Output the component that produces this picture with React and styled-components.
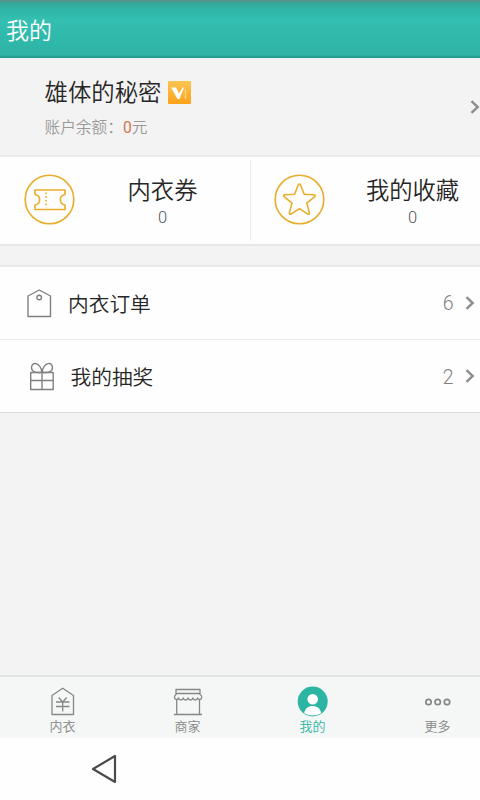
import React from 'react';
import styled, { createGlobalStyle } from 'styled-components';

const GlobalStyle = createGlobalStyle`
    body {
        margin: 0;
        background: #f3f3f3;
        overflow: hidden;
    }
`;

const Screen = styled.div`
    display: flex;
    flex-direction: column;
    width: 480px;
    height: 800px;
    overflow: hidden;
    background: #f3f3f3;
    color: #262626;
    font-family: Roboto, "Noto Sans CJK SC", sans-serif;
    font-weight: 350;
    white-space: nowrap;
`;

const Header = styled.header`
    display: flex;
    align-items: center;
    flex: none;
    box-sizing: border-box;
    height: 59px;
    padding: 0 6px 1px;
    background: linear-gradient(#5f8e87 0, #35a598 3px, #2fb5a6 9px, #33bfb1 20px, #2db3a5 55px, #249b8b 57px, #269b8c 58px, #e8f3f1 58px);
    color: #fff;
    font-size: 23px;
`;

const Profile = styled.section`
    display: flex;
    align-items: center;
    justify-content: space-between;
    flex: none;
    box-sizing: border-box;
    height: 96px;
    padding: 0 0 0 44.5px;
`;

const UserName = styled.div`
    display: flex;
    align-items: center;
    gap: 6.5px;
    height: 35px;
    font-size: 23.4px;
    line-height: 33px;

    span {
        padding-top: 2px;
    }
`;

const VipBadge = styled.svg`
    display: block;
    width: 23px;
    height: 23px;
`;

const Balance = styled.div`
    height: 23px;
    margin-top: 6px;
    color: #999;
    font-size: 15.7px;
    line-height: 24px;

    span {
        color: #cf7650;
        font-weight: 400;
    }
`;

const Stats = styled.section`
    display: grid;
    grid-template-columns: 250px 250px;
    flex: none;
    box-sizing: border-box;
    width: 500px;
    height: 91px;
    border-top: 2px solid #ebebeb;
    border-bottom: 2px solid #e7e7e7;
    background: #fefefe;
`;

const Stat = styled.div`
    display: flex;
    align-items: center;
    margin: 3px 0;
    padding: 0 0 2px 24px;
    box-shadow: ${({ $divided }) => ($divided ? 'inset 1px 0 #eee' : 'none')};
`;

const StatIcon = styled.svg`
    flex: none;
    width: 51px;
    height: 51px;
    fill: none;
    stroke: #e8ad2b;
    stroke-width: 1.6;
    stroke-linejoin: round;
`;

const StatText = styled.div`
    display: flex;
    flex-direction: column;
    align-items: center;
    width: 175px;
    padding-top: 6px;
    font-size: 23.3px;
    line-height: 31px;

    small {
        color: #555;
        font-size: 16.5px;
        line-height: 22px;
    }
`;

const List = styled.section`
    flex: none;
    box-sizing: border-box;
    height: 148px;
    margin-top: 19px;
    border-top: 2px solid #e9e9e9;
    border-bottom: 1px solid #dcdcdc;
    background: #fefefe;
`;

const Row = styled.div`
    display: flex;
    align-items: center;
    box-sizing: border-box;
    height: ${({ $height }) => $height}px;
    padding: 0 0 1px ${({ $indent }) => $indent}px;
    border-bottom: ${({ $line }) => ($line ? '1px solid #ebebeb' : 'none')};
    font-size: 20.7px;
`;

const RowIcon = styled.svg`
    flex: none;
    width: 28px;
    height: 30px;
    margin-right: 15px;
    fill: none;
    stroke: #808080;
    stroke-width: 1.4;
    stroke-linejoin: round;
`;

const Count = styled.span`
    margin-left: auto;
    padding-top: 2px;
    color: #7f7f7f;
    font-size: 19.5px;
`;

const Arrow = styled.svg`
    flex: none;
    width: 10px;
    height: 14px;
    margin-left: ${({ $gap }) => $gap || 0}px;
    margin-right: ${({ $end }) => $end || 0}px;
    fill: none;
    stroke: #8d8d8d;
    stroke-width: 2.4;
`;

const TabBar = styled.nav`
    display: grid;
    grid-template-columns: repeat(4, 125px);
    flex: none;
    box-sizing: border-box;
    width: 500px;
    height: 63px;
    margin-top: auto;
    border-top: 2px solid #e3e4e4;
    background: #f5f6f6;
`;

const Tab = styled.div`
    display: flex;
    flex-direction: column;
    align-items: center;
    padding-top: 8px;
    color: ${({ $active }) => ($active ? '#2cb5a3' : '#858887')};
    font-size: 13px;
    line-height: 20px;
`;

const TabIcon = styled.svg`
    width: 32px;
    height: 32px;
    fill: none;
    stroke: currentColor;
    stroke-width: 1.3;
    stroke-linejoin: round;
`;

const SystemBar = styled.footer`
    display: flex;
    align-items: center;
    flex: none;
    height: 62px;
    padding-left: 91px;
    background: #fefefe;
`;

const BackButton = styled.svg`
    width: 26px;
    height: 30px;
    fill: none;
    stroke: #4b4b4b;
    stroke-width: 2.2;
    stroke-linejoin: round;
`;

const Chevron = (props) => (
    <Arrow viewBox="0 0 10 14" {...props}>
        <path d="M1.5 1.2 7.7 7 1.5 12.8" />
    </Arrow>
);

const App = () => {
    return (
        <>
            <GlobalStyle />
            <Screen>
                <Header>我的</Header>

                <Profile>
                    <div>
                        <UserName>
                            <span>雄体的秘密</span>
                            <VipBadge viewBox="0 0 23 23">
                                <defs>
                                    <linearGradient id="gold" x1="0" y1="0" x2="0" y2="1">
                                        <stop offset="0" stopColor="#fbc552" />
                                        <stop offset="1" stopColor="#fba21a" />
                                    </linearGradient>
                                </defs>
                                <rect width="23" height="23" rx="1" fill="url(#gold)" />
                                <path d="M3 6.5h5l3 6 3.5-6H16L11.5 18h-2z" fill="#fff" />
                                <path d="M17.5 8v10" stroke="#fcd27e" strokeWidth="1.4" />
                            </VipBadge>
                        </UserName>
                        <Balance>账户余额：<span>0</span>元</Balance>
                    </div>
                    <Chevron />
                </Profile>

                <Stats>
                    <Stat>
                        <StatIcon viewBox="0 0 51 51">
                            <circle cx="25.5" cy="25.5" r="24.3" />
                            <path d="M11 16h30v4.5c-6.2 1.2-6.2 9.3 0 10.5v4.5H11V31c6.2-1.2 6.2-9.3 0-10.5z" />
                            <path d="M22 18.5v15" strokeDasharray="1.7 2" />
                        </StatIcon>
                        <StatText>
                            内衣券
                            <small>0</small>
                        </StatText>
                    </Stat>
                    <Stat $divided>
                        <StatIcon viewBox="0 0 51 51">
                            <circle cx="25.5" cy="25.5" r="24.3" />
                            <path d="M24.3 10.8q1.1-1.7 2.2 0l3.7 9.4 10 .6q1.7.5.5 1.8l-7.9 6.5 2.6 9.8q0 1.7-1.6 1.2l-8.4-5.5-8.400 5.5q-1.600.5-1.600-1.200l2.600-9.800-7.900-6.500q-1.200-1.300.5-1.800l10-.6z" />
                        </StatIcon>
                        <StatText>
                            我的收藏
                            <small>0</small>
                        </StatText>
                    </Stat>
                </Stats>

                <List>
                    <Row $height={73} $indent={25} $line>
                        <RowIcon viewBox="0 0 28 30">
                            <path d="M3 8 14.2 2 25.5 8v20.500H3z" />
                            <circle cx="14.2" cy="9.5" r="2.3" />
                        </RowIcon>
                        内衣订单
                        <Count>6</Count>
                        <Chevron $gap={11.5} $end={5} />
                    </Row>
                    <Row $height={73} $indent={27.5}>
                        <RowIcon viewBox="0 0 28 30">
                            <path d="M2.7 11.5h22.5v17H2.7zM2.7 19.5h22.5M14 11.5v17" />
                            <path d="M14 11C8 12.500 3.500 10.500 3.500 6.800 3.500 0 12 1 14 11zM14 11c6 1.500 10.500-.5 10.500-4.200C24.500 0 16 1 14 11z" />
                        </RowIcon>
                        我的抽奖
                        <Count>2</Count>
                        <Chevron $gap={11.5} $end={5} />
                    </Row>
                </List>

                <TabBar>
                    <Tab>
                        <TabIcon viewBox="0 0 32 32">
                            <path d="M5 10.5 15.700 3.200 26.500 10.500v19H5z" />
                            <path d="M11.700 12.500l4 4.500 4-4.500M9 17h13.500M9 21.500h13.500M15.700 17v9.500" />
                        </TabIcon>
                        内衣
                    </Tab>
                    <Tab>
                        <TabIcon viewBox="0 0 32 32">
                            <path d="M4 10V4.500h24V10M4 8.500h24M4.700 14v15.500M27.500 14v15.500M2 29.500h28" />
                            <path d="M4 9.500C1.700 11 2 14.500 4.500 14.500q1.700 0 2-1.500.5 2 2.400 2t2.400-2q.5 2 2.400 2t2.400-2q.5 2 2.400 2t2.400-2q.5 2 2.400 2t2.200-2q.6 1.500 2.200 1.500c2.500 0 2.800-3.500.5-5" />
                        </TabIcon>
                        商家
                    </Tab>
                    <Tab $active>
                        <TabIcon viewBox="0 0 32 32">
                            <circle cx="15.7" cy="16.5" r="15" fill="currentColor" stroke="none" />
                            <circle cx="15.7" cy="14.3" r="5.3" fill="#fff" stroke="none" />
                            <path d="M7.2 28.3c1-9.8 16-9.8 17 0q-8.5 4.5-17 0z" fill="#fff" stroke="none" />
                        </TabIcon>
                        我的
                    </Tab>
                    <Tab>
                        <TabIcon viewBox="0 0 32 32">
                            <g strokeWidth="1.7">
                                <circle cx="6.5" cy="17" r="2.7" />
                                <circle cx="15.7" cy="17" r="2.7" />
                                <circle cx="25" cy="17" r="2.7" />
                            </g>
                        </TabIcon>
                        更多
                    </Tab>
                </TabBar>

                <SystemBar>
                    <BackButton viewBox="0 0 26 30">
                        <path d="M2 15 24 2v26z" />
                    </BackButton>
                </SystemBar>
            </Screen>
        </>
    );
};

export default App;
